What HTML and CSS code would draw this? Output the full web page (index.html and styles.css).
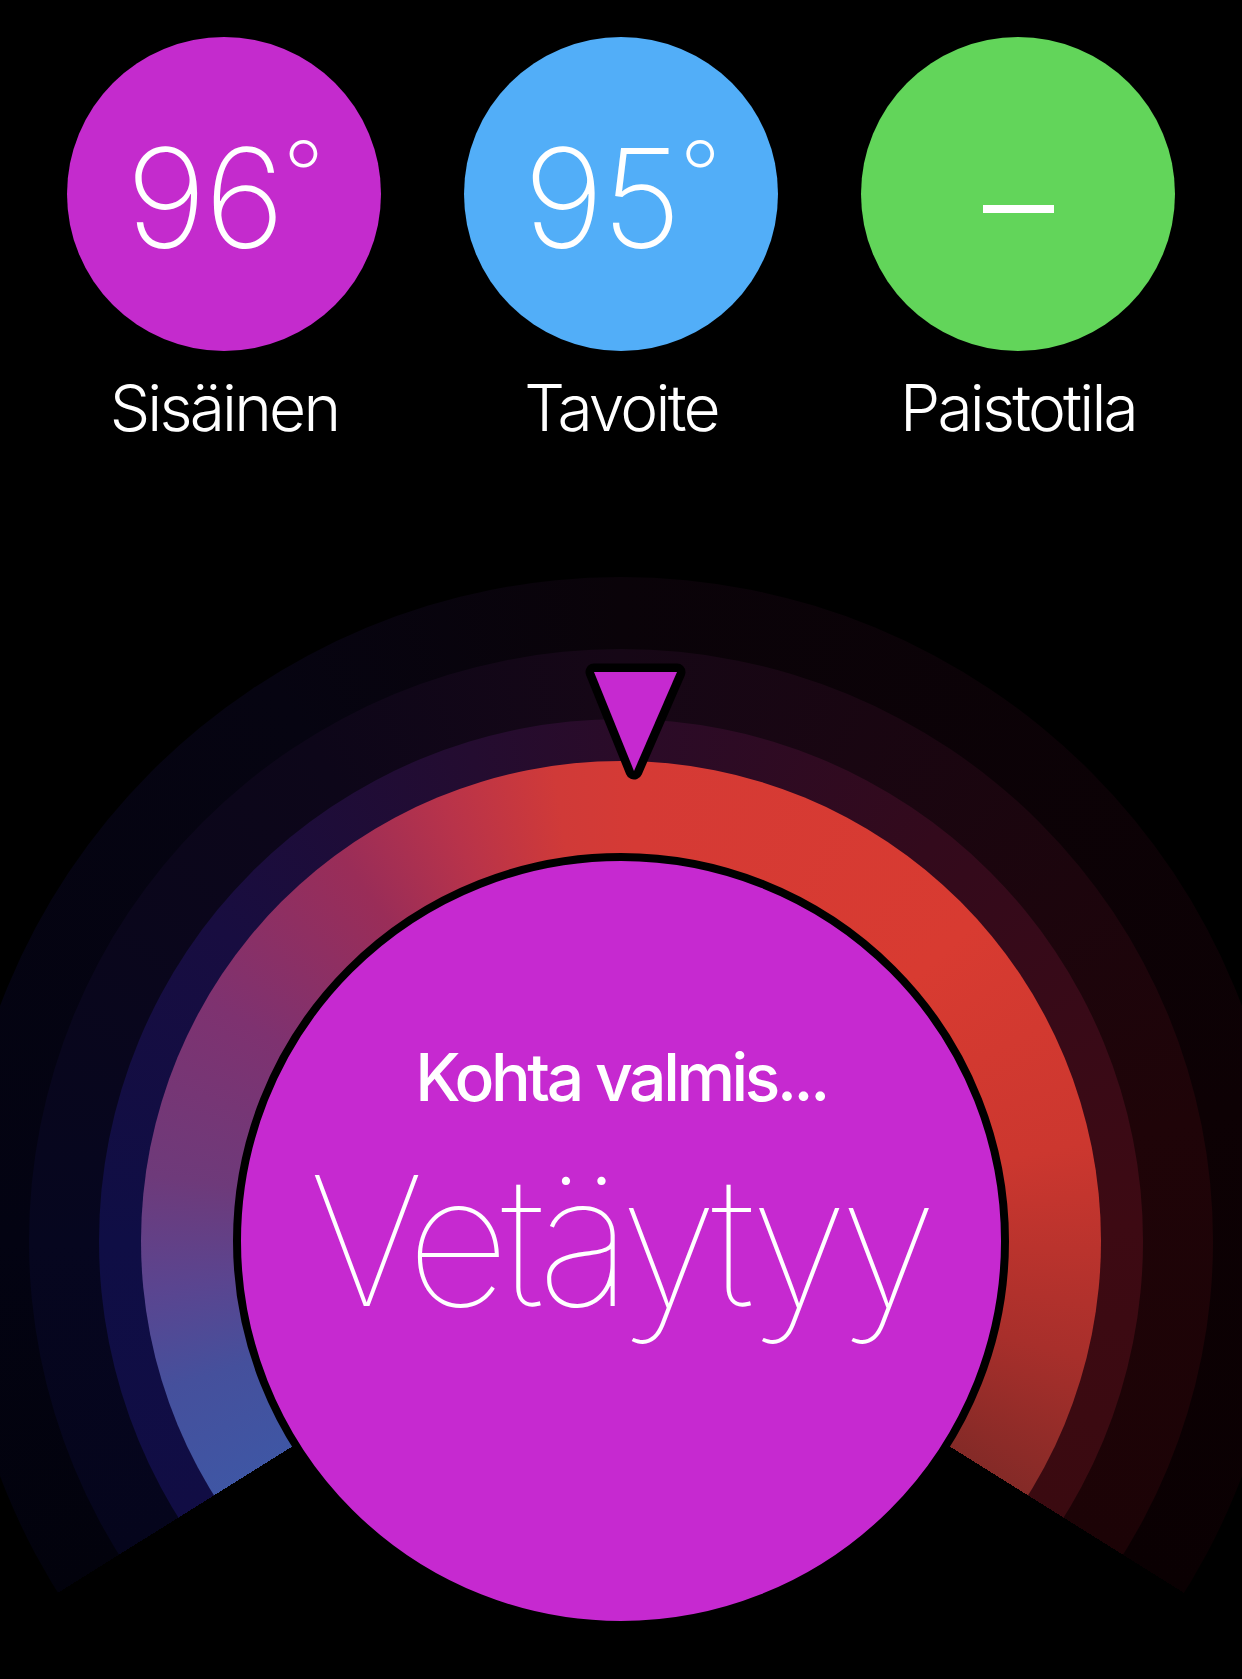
FILE: index.html
```html
<!DOCTYPE html>
<html lang="fi">
<head>
<meta charset="utf-8">
<title>Paisto</title>
<link rel="stylesheet" href="styles.css">
</head>
<body>
<main class="screen">
  <section class="stats">
    <div class="stat">
      <div class="bubble bubble-inside"><span class="value">96<span class="deg">°</span></span></div>
      <div class="label">Sisäinen</div>
    </div>
    <div class="stat">
      <div class="bubble bubble-target"><span class="value">95<span class="deg">°</span></span></div>
      <div class="label">Tavoite</div>
    </div>
    <div class="stat">
      <div class="bubble bubble-mode"><span class="dash"></span></div>
      <div class="label">Paistotila</div>
    </div>
  </section>
  <section class="gauge-wrap">
    <div class="gauge">
      <div class="ring ring-4">
        <div class="ring ring-3">
          <div class="ring ring-2">
            <div class="ring ring-1">
              <div class="core">
                <div class="status">Kohta valmis...</div>
                <div class="phase">Vetäytyy</div>
              </div>
            </div>
          </div>
        </div>
      </div>
      <svg class="pointer" viewBox="0 0 1328 300" width="1328" height="300" aria-hidden="true">
        <polygon points="637,95 720,95 677,194" fill="#c629d0" stroke="#000" stroke-width="17" stroke-linejoin="round" paint-order="stroke"/>
      </svg>
    </div>
  </section>
</main>
</body>
</html>
```

FILE: styles.css
```css
html, body {
  margin: 0;
  padding: 0;
  background: #000;
  overflow: hidden;
}

body {
  width: 1242px;
  height: 1679px;
  font-family: Inter, "Liberation Sans", sans-serif;
  color: #fff;
}

.screen {
  display: flex;
  flex-direction: column;
}

.stats {
  display: flex;
  justify-content: center;
  gap: 83px;
  padding-top: 37px;
}

.stat {
  display: flex;
  flex-direction: column;
  align-items: center;
  width: 314px;
}

.bubble {
  width: 314px;
  height: 314px;
  border-radius: 50%;
  display: flex;
  align-items: center;
  justify-content: center;
}

.bubble-inside { background: #c42bcd; }
.bubble-target { background: #52aef8; }
.bubble-mode { background: #62d55a; }

.value {
  font-size: 138px;
  font-weight: 200;
  line-height: 1;
  letter-spacing: -2px;
  padding-left: 2px;
  margin-top: 8px;
}

.deg {
  font-size: 90px;
  line-height: 0;
  vertical-align: 42px;
  letter-spacing: 0;
}

.dash {
  display: block;
  width: 71px;
  height: 8px;
  background: #fff;
  margin-top: 30px;
}

.label {
  margin-top: 25px;
  font-size: 64px;
  font-weight: 300;
  line-height: 1;
  letter-spacing: -2.8px;
}

.gauge-wrap {
  display: flex;
  justify-content: center;
  margin-top: 137px;
}

.gauge {
  position: relative;
  flex: none;
  width: 1328px;
  height: 1328px;
}

.ring {
  border-radius: 50%;
  display: flex;
  align-items: center;
  justify-content: center;
  flex: none;
}

.ring-4 {
  width: 1328px;
  height: 1328px;
  background: conic-gradient(from 238deg,
    #02020c 0deg, #030312 32deg, #060411 90deg, #0a0309 122deg,
    #0d0104 200deg, #0a0002 244deg, transparent 244deg 360deg);
}

.ring-3 {
  width: 1184px;
  height: 1184px;
  background: conic-gradient(from 238deg,
    #05051c 0deg, #06061f 32deg, #0d0619 90deg, #160716 122deg,
    #1f0408 200deg, #1c0306 244deg, transparent 244deg 360deg);
}

.ring-2 {
  width: 1044px;
  height: 1044px;
  background: conic-gradient(from 238deg,
    #110d44 0deg, #0f0e45 32deg, #180d40 70deg, #240c30 105deg,
    #2a0b28 122deg, #330a1c 160deg, #3d0a13 210deg, #3a0a10 244deg,
    transparent 244deg 360deg);
}

.ring-1 {
  width: 960px;
  height: 960px;
  background: conic-gradient(from 238deg,
    #3f56a4 0deg, #45509c 14deg, #5a4590 26deg, #6e3a7a 40deg,
    #7e3270 62deg, #9a2d58 86deg, #b8334a 100deg, #d03a38 114deg,
    #d53a35 124deg, #d83b31 170deg, #cc372f 200deg, #a82f2b 226deg,
    #842a27 244deg, transparent 244deg 360deg);
}

.core {
  box-sizing: border-box;
  width: 776px;
  height: 776px;
  border-radius: 50%;
  border: 8px solid #000;
  background: #c629d0;
  display: flex;
  flex-direction: column;
  align-items: center;
  justify-content: flex-start;
  padding-top: 183px;
}

.status {
  font-size: 66px;
  font-weight: 460;
  line-height: 1;
  letter-spacing: -3.4px;
}

.phase {
  margin-top: 41px;
  font-size: 180px;
  font-weight: 100;
  line-height: 1;
  letter-spacing: -8.5px;
  padding-right: 4px;
}

.pointer {
  position: absolute;
  left: 0;
  top: 0;
}
```
